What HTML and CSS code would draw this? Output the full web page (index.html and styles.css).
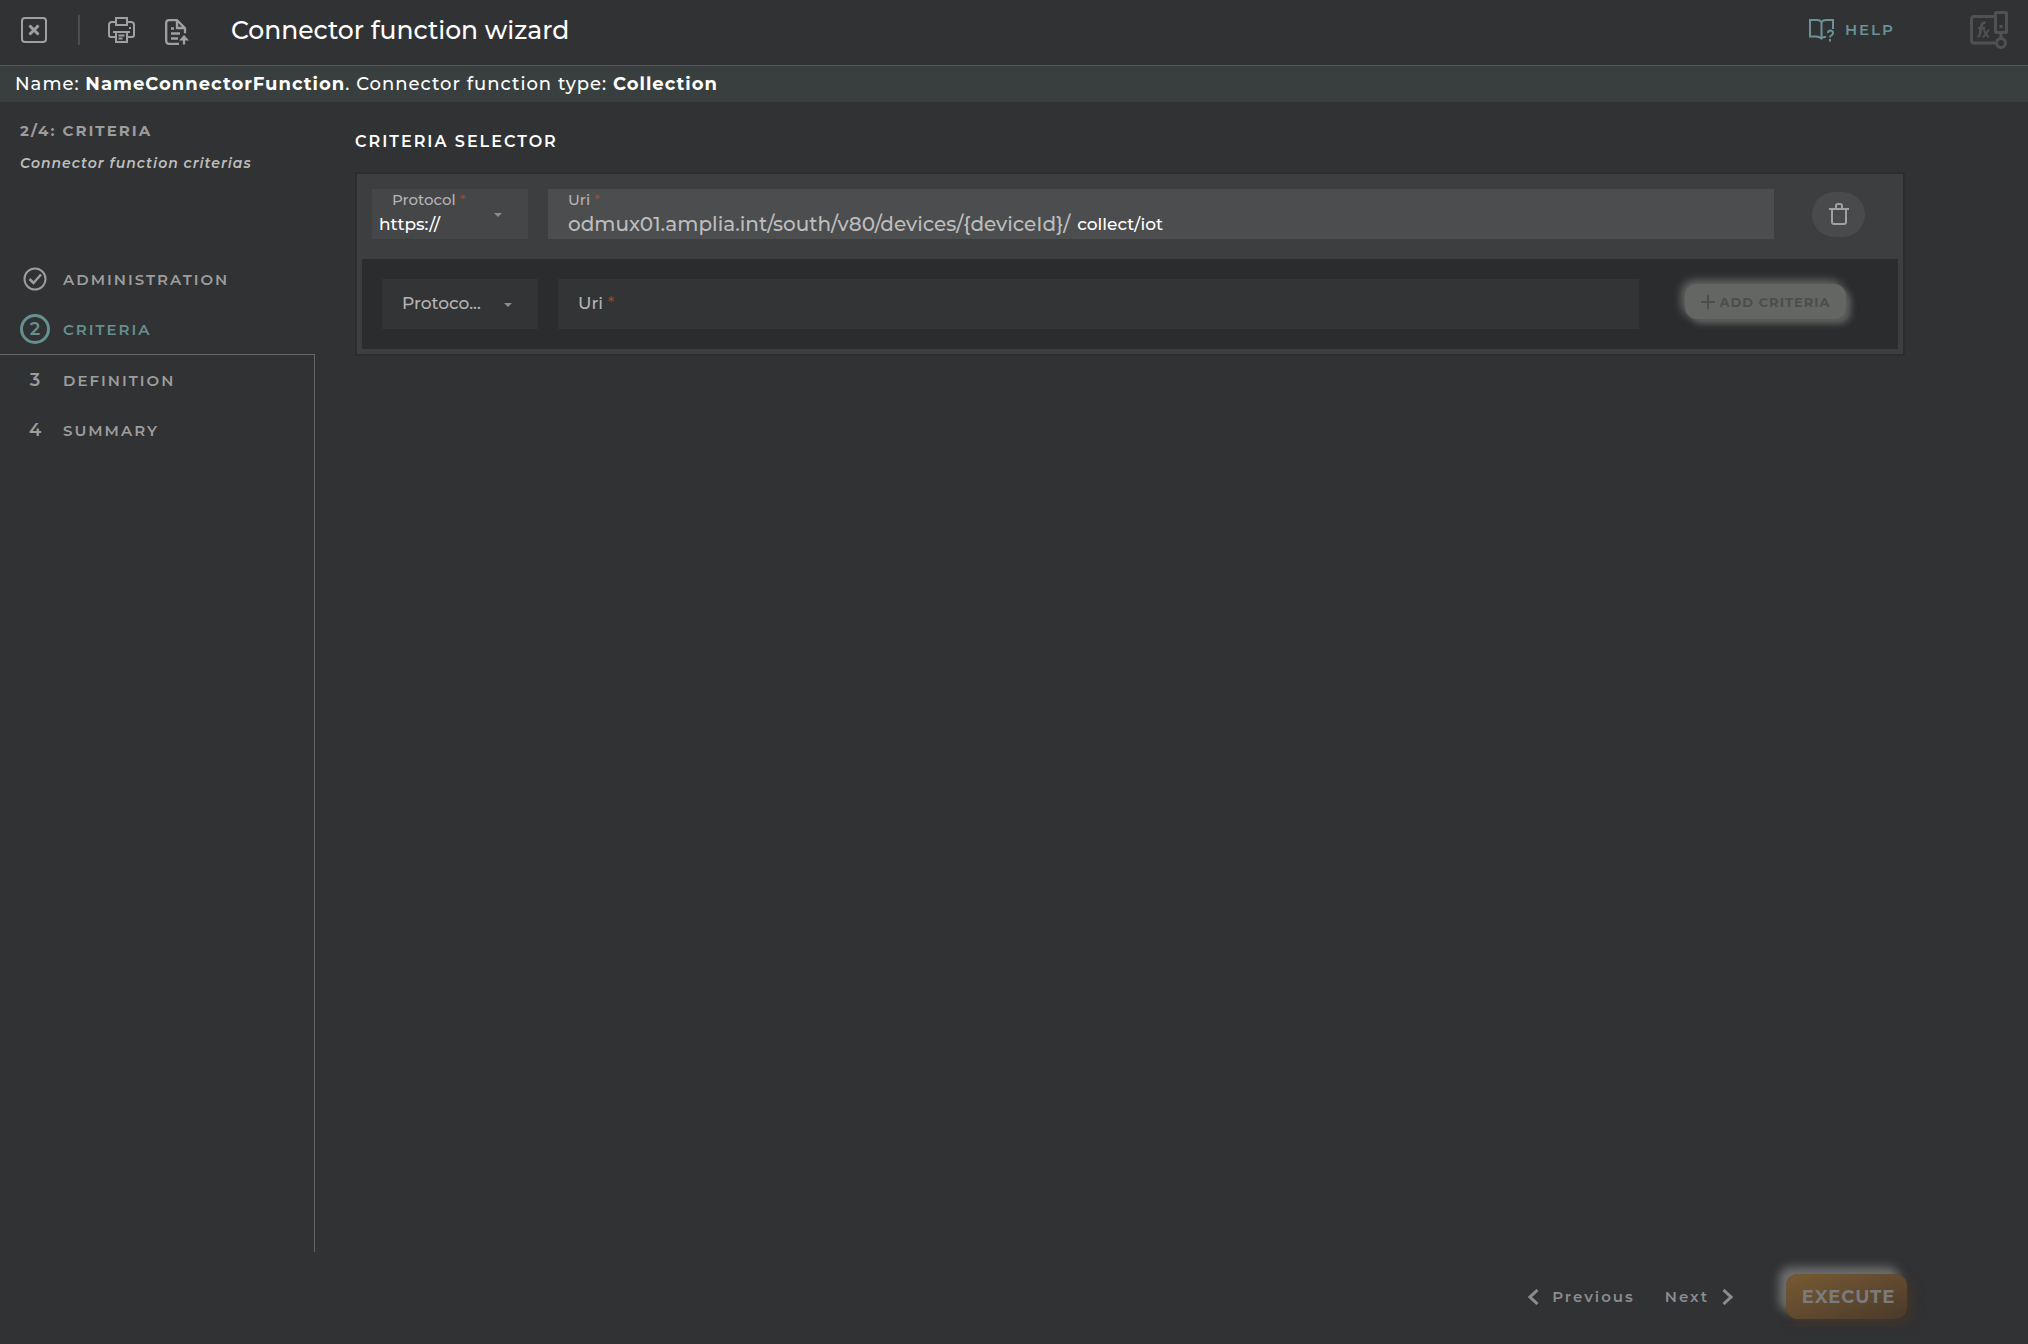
FILE: index.html
```html
<!DOCTYPE html>
<html lang="en">
<head>
<meta charset="utf-8">
<title>Connector function wizard</title>
<meta name="viewport" content="width=device-width, initial-scale=1">
<link rel="stylesheet" href="styles.css">
</head>
<body>
<header class="topbar">
  <button class="icon-btn" type="button" aria-label="Close">
    <svg width="26" height="26" viewBox="0 0 26 26" fill="none" stroke="currentColor" stroke-width="2"><rect x="1" y="1" width="24" height="24" rx="3"/><path d="M8.500 8.500l9 9M17.500 8.500l-9 9" stroke-width="3"/></svg>
  </button>
  <span class="divider"></span>
  <button class="icon-btn print" type="button" aria-label="Print">
    <svg width="27" height="26" viewBox="0 0 27 26" fill="none" stroke="currentColor" stroke-width="2"><path d="M8 8V1h11v7M7 20H3q-2 0-2-2V8q0-3 3-3h4v3h11V5h4q3 0 3 3v10q0 2-2 2h-4M5 15h17M8 15v10h11V15M10.500 18.500h6M10.500 21.500h4"/><path d="M21 11h2"/></svg>
  </button>
  <button class="icon-btn export" type="button" aria-label="Export">
    <svg width="24" height="26" viewBox="0 0 24 26" fill="none" stroke="currentColor" stroke-width="2.300"><path d="M14 24.800H4q-2.800 0-2.800-3V4q0-2.800 2.800-2.800h8l8 8v5M12 1.200V9h8M6 9.500h3M6 14.500h9M6 19.500h7"/><path d="M19 25.500v-8"/><path d="M14 21.500L19 16l5 5.500z" fill="currentColor" stroke="none"/></svg>
  </button>
  <h1 class="title">Connector function wizard</h1>
  <a class="help" href="#help">
    <svg width="26" height="24" viewBox="0 0 26 24" fill="none" stroke="currentColor" stroke-width="2"><path d="M17 19q-3-.500-4.500 1.500Q10 18.500 7 18.500H1V2h7q3 0 4.500 2Q14 2 17 2h7v9M12.500 4v16.500"/><path d="M19 15q0-2.500 2.500-2.500T24 15q0 1.500-1.500 2.300-1.500.700-1.500 2.200M21 21v2.500"/></svg>
    <span>HELP</span>
  </a>
  <svg class="brand" width="38" height="38" viewBox="0 0 38 38" fill="none" stroke="currentColor" stroke-width="3"><path d="M24 5.500H4Q1.500 5.500 1.500 8v21.500Q1.500 32 4 32h21"/><rect x="25.500" y="1.500" width="11" height="20" rx="1"/><path d="M31 21v6M31 14v3"/><circle cx="31" cy="32" r="4.500"/><path d="M7.500 25.500q2 0 2.500-3l1.500-8q.500-3 4-3M8 17h7" stroke-width="2.500"/><path d="M13.500 18.500l5 8M19 18.500l-6 8" stroke-width="2"/></svg>
</header>

<p class="summary">Name: <strong>NameConnectorFunction</strong>. Connector function type: <strong>Collection</strong></p>

<div class="layout">
  <aside class="sidebar">
    <div class="intro">
      <h2 class="intro-title">2/4: CRITERIA</h2>
      <p class="intro-text">Connector function criterias</p>
    </div>
    <ol class="steps">
      <li class="step"><span class="mark"><svg width="24" height="24" viewBox="0 0 24 24" fill="none" stroke="currentColor" stroke-width="2"><circle cx="12" cy="12" r="10.500"/><path d="M6.500 12l4 4 7.500-8.500" stroke-width="2.500"/></svg></span>ADMINISTRATION</li>
      <li class="step current" aria-current="step"><span class="mark ring">2</span>CRITERIA</li>
    </ol>
    <ol class="steps pending" start="3">
      <li class="step"><span class="mark">3</span>DEFINITION</li>
      <li class="step"><span class="mark">4</span>SUMMARY</li>
    </ol>
  </aside>

  <main class="content">
    <h2 class="section-title">CRITERIA SELECTOR</h2>
    <section class="panel">
      <div class="row">
        <div class="field protocol filled">
          <label for="protocol-1">Protocol <b class="req">*</b></label>
          <select id="protocol-1"><option>https://</option></select>
          <svg class="arrow" width="8" height="4" viewBox="0 0 8 4"><path d="M0 0h8L4 4z" fill="currentColor"/></svg>
        </div>
        <div class="field uri filled">
          <label for="uri-1">Uri <b class="req">*</b></label>
          <div class="uri-line"><span class="prefix">odmux01.amplia.int/south/v80/devices/{deviceId}/</span><input id="uri-1" type="text" value="collect/iot"></div>
        </div>
        <button class="trash" type="button" aria-label="Delete criteria">
          <svg width="20" height="22" viewBox="0 0 20 22" fill="none" stroke="currentColor" stroke-width="2"><path d="M0 6h20M3 6v13q0 2 2 2h10q2 0 2-2V6M7 5V3q0-2 2-2h2q2 0 2 2v2"/></svg>
        </button>
      </div>
      <div class="row new">
        <div class="field protocol">
          <select aria-label="Protocol"><option>Protoco...</option></select>
          <svg class="arrow" width="8" height="4" viewBox="0 0 8 4"><path d="M0 0h8L4 4z" fill="currentColor"/></svg>
        </div>
        <div class="field uri">
          <label for="uri-2">Uri <b class="req">*</b></label>
          <input id="uri-2" type="text">
        </div>
        <button class="add" type="button" disabled>
          <svg width="14" height="14" viewBox="0 0 14 14" stroke="currentColor" stroke-width="2"><path d="M7 0v14M0 7h14"/></svg>ADD CRITERIA
        </button>
      </div>
    </section>
  </main>
</div>

<footer class="actions">
  <button class="nav" type="button"><svg width="11" height="16" viewBox="0 0 11 16" fill="none" stroke="currentColor" stroke-width="3"><path d="M9.500 1L2 8l7.500 7"/></svg>Previous</button>
  <button class="nav" type="button">Next<svg width="11" height="16" viewBox="0 0 11 16" fill="none" stroke="currentColor" stroke-width="3"><path d="M1.500 1L9 8l-7.500 7"/></svg></button>
  <button class="execute" type="button" disabled>EXECUTE</button>
</footer>
</body>
</html>
```
FILE: styles.css
```css
* { box-sizing: border-box; }

body {
  margin: 0;
  min-height: 100vh;
  display: flex;
  flex-direction: column;
  background: #313234;
  color: #9d9d9d;
  font-family: Montserrat, Inter, sans-serif;
  font-size: 15px;
}

h1, h2, p, ol { margin: 0; padding: 0; }
ol { list-style: none; }
svg { display: block; flex: none; }
button, input, select { font: inherit; color: inherit; border: 0; background: none; padding: 0; margin: 0; }
select { appearance: none; }

.topbar {
  display: flex;
  align-items: center;
  height: 66px;
  padding: 0 20px 6px 21px;
  border-bottom: 1px solid #555657;
}
.icon-btn { color: #a0a0a0; }
.divider { width: 2px; height: 30px; margin: 0 28px 0 31px; background: #4c4d4f; }
.export { margin: 4px 42px 0 30px; }
.title { flex: 1; font-size: 25px; font-weight: 500; line-height: 32px; color: #fff; }
.help {
  display: flex;
  align-items: center;
  gap: 10px;
  margin-right: 75px;
  color: #6b9297;
  font-weight: 600;
  letter-spacing: 2px;
  text-decoration: none;
}
.brand { color: #505252; }

.summary {
  height: 36px;
  padding: 0 15px;
  background: #393f3f;
  color: #fff;
  font-size: 18px;
  font-weight: 500;
  line-height: 36px;
  letter-spacing: 1px;
}
.summary strong { font-weight: 700; }

.layout { flex: 1; display: flex; }

.sidebar { width: 315px; display: flex; flex-direction: column; }
.intro { height: 152px; padding: 19px 20px 0; }
.intro-title { font-size: 15px; font-weight: 700; line-height: 20px; letter-spacing: 2px; }
.intro-text { margin-top: 12px; color: #bdbdbd; font-size: 14px; font-weight: 600; font-style: italic; line-height: 20px; letter-spacing: 1px; }
.step { display: flex; align-items: center; gap: 13px; height: 50px; padding-left: 20px; font-weight: 600; letter-spacing: 2px; }
.mark { display: flex; align-items: center; justify-content: center; width: 30px; height: 30px; font-size: 18px; letter-spacing: 0; }
.ring { border: 3px solid currentColor; border-radius: 50%; }
.current { color: #65908f; }
.steps.pending { flex: 1; border-top: 1px solid #656667; border-right: 1px solid #656667; }

.content { flex: 1; padding: 29px 123px 0 40px; }
.section-title { color: #fff; font-size: 16px; font-weight: 600; line-height: 22px; letter-spacing: 2px; }
.panel { margin-top: 19px; padding: 15px 5px 5px; border: 2px solid #2c2d2f; background: #3d3e40; }
.row { display: flex; align-items: center; gap: 20px; padding: 0 33px 20px 10px; }
.field { position: relative; display: flex; height: 50px; background: #333436; color: #b4b4b4; font-size: 17px; font-weight: 500; }
.protocol { width: 156px; }
.protocol select { width: 100%; padding: 0 0 2px 20px; }
.arrow { position: absolute; right: 26px; top: 24px; color: #8c8c8c; }
.uri { flex: 1; align-items: center; padding: 0 0 2px 20px; }
.uri input { flex: 1; min-width: 0; outline: 0; }
.req { color: #a34a2c; font-weight: 400; }

.filled { flex-direction: column; align-items: stretch; background: #454648; }
.filled label { height: 23px; font-size: 15px; line-height: 21px; }
.filled select, .filled input { color: #fff; font-size: 17px; line-height: 24px; height: 24px; }
.filled.protocol label { padding-left: 20px; }
.filled.protocol select { padding: 0 0 0 7px; }
.filled.uri { background: #4c4d4f; }
.uri-line { display: flex; align-items: center; gap: 7px; height: 24px; }
.prefix { color: #bdbdbd; font-size: 20px; line-height: 24px; }

.trash { display: flex; align-items: center; justify-content: center; width: 53px; height: 45px; margin-left: 18px; border-radius: 23px; background: #484a4b; color: #a0a0a0; }

.row.new { padding: 20px 52px 20px 20px; background: #2b2c2e; }
.add {
  display: flex;
  align-items: center;
  justify-content: center;
  gap: 5px;
  width: 161px;
  height: 35px;
  margin: 0 0 5px 26px;
  border-radius: 12px;
  background: #646664;
  box-shadow: 5px 5px 6px #5c5e5c, -3px -3px 10px #6e706e;
  color: #4c4e4d;
  font-size: 13px;
  font-weight: 700;
  letter-spacing: 1px;
}

.actions { display: flex; align-items: center; height: 92px; padding: 0 121px 3px 0; justify-content: flex-end; }
.nav { display: flex; align-items: center; gap: 13px; margin-right: 30px; font-weight: 600; letter-spacing: 2px; color: #8c8c8c; }
.execute {
  width: 121px;
  height: 45px;
  margin-left: 23px;
  padding-left: 4px;
  border-radius: 12px;
  background: linear-gradient(160deg, #785a33, #4a3a2b);
  box-shadow: -7px -7px 10px #6e6f70, 4px 4px 12px #433529;
  color: #7b7b7b;
  font-size: 18px;
  font-weight: 700;
  letter-spacing: 1px;
}
```
